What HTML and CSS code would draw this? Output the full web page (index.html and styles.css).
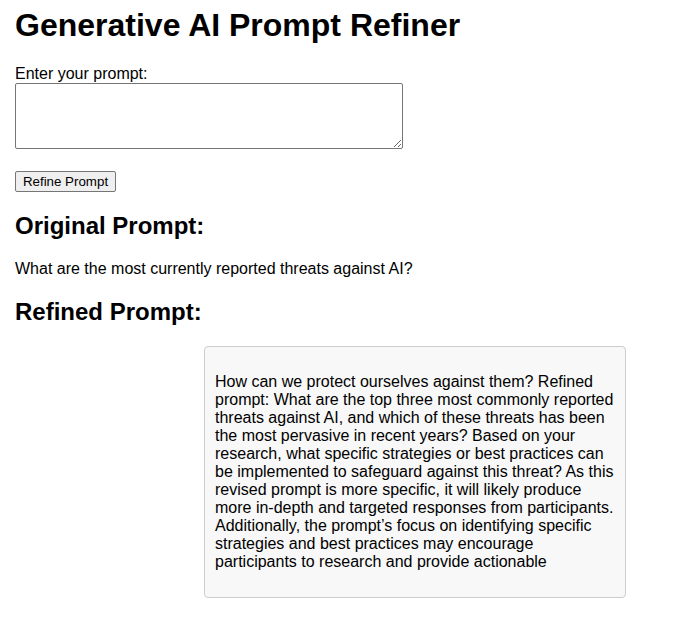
FILE: index.html
```html
<!DOCTYPE html>
<html>
<head>
<meta charset="utf-8">
<title>Generative AI Prompt Refiner</title>
<link rel="stylesheet" href="styles.css">
</head>
<body>
<h1 class="title">Generative AI Prompt Refiner</h1>
<form class="form">
  <label class="label" for="prompt">Enter your prompt:</label>
  <textarea id="prompt" class="input"></textarea>
  <button type="button" class="btn">Refine Prompt</button>
</form>
<h2 class="heading">Original Prompt:</h2>
<p class="text">What are the most currently reported threats against AI?</p>
<h2 class="heading">Refined Prompt:</h2>
<div class="result">
  <p class="result-text">How can we protect ourselves against them? Refined prompt: What are the top three most commonly reported threats against AI, and which of these threats has been the most pervasive in recent years? Based on your research, what specific strategies or best practices can be implemented to safeguard against this threat? As this revised prompt is more specific, it will likely produce more in-depth and targeted responses from participants. Additionally, the prompt’s focus on identifying specific strategies and best practices may encourage participants to research and provide actionable</p>
</div>
</body>
</html>
```

FILE: styles.css
```css
html, body {
  background: #fff;
}
body {
  margin: 0;
  padding: 7px 15px 0;
  font-family: "Liberation Sans", Arial, sans-serif;
  color: #000;
  font-size: 16px;
}
.title {
  font-size: 32px;
  font-weight: bold;
  margin: 0 0 21px;
}
.form {
  display: flex;
  flex-direction: column;
  align-items: flex-start;
}
.label {
  display: block;
}
.input {
  width: 388px;
  height: 66px;
  box-sizing: border-box;
  border: 1px solid #767676;
  border-radius: 2px;
  margin: 0;
  font-family: "Liberation Mono", monospace;
  font-size: 13px;
}
.btn {
  margin-top: 22px;
  height: 21px;
  width: 101px;
  box-sizing: border-box;
  padding: 1px 6px;
  font-family: "Liberation Sans", Arial, sans-serif;
  font-size: 13.333px;
  background: #efefef;
  border: 1px solid #767676;
  border-radius: 2px;
  color: #000;
}
.heading {
  font-size: 24px;
  font-weight: bold;
  margin: 20px 0;
}
.text {
  margin: 16px 0;
}
.result {
  margin-left: 189px;
  width: 422px;
  box-sizing: border-box;
  padding: 10px;
  border: 1px solid #ccc;
  border-radius: 4px;
  background: #f8f8f8;
}
.result-text {
  margin: 16px 0;
  line-height: 18px;
}
```
